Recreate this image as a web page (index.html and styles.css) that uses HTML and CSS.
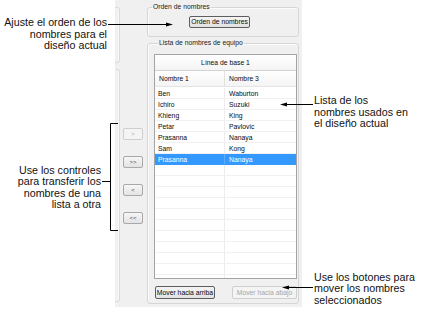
FILE: index.html
```html
<!DOCTYPE html>
<html lang="es">
<head>
<meta charset="utf-8">
<title>Orden de nombres</title>
<link rel="stylesheet" href="styles.css">
</head>
<body>
<div class="page">
  <div class="col-left">
    <p class="note note-order">Ajuste el orden de los<br>nombres para el<br>diseño actual</p>
    <p class="note note-transfer">Use los controles<br>para transferir los<br>nombres de una<br>lista a otra</p>
  </div>

  <div class="panel">
    <div class="sliver">
      <div class="sbox sbox-top"></div>
      <div class="sbox sbox-bottom"></div>
    </div>
    <div class="movecol">
      <button class="btn small disabled">&gt;</button>
      <button class="btn small">&gt;&gt;</button>
      <button class="btn small">&lt;</button>
      <button class="btn small">&lt;&lt;</button>
    </div>
    <div class="main">
      <fieldset class="group group-order">
        <legend>Orden de nombres</legend>
        <button class="btn default order-btn">Orden de nombres</button>
      </fieldset>
      <fieldset class="group group-list">
        <legend>Lista de nombres de equipo</legend>
        <div class="table">
          <div class="thead1">Línea de base 1</div>
          <div class="row thead2"><span class="c1">Nombre 1</span><span class="c2">Nombre 3</span></div>
          <div class="body">
            <div class="row"><span class="c1">Ben</span><span class="c2">Waburton</span></div>
            <div class="row"><span class="c1">Ichiro</span><span class="c2">Suzuki</span></div>
            <div class="row"><span class="c1">Khieng</span><span class="c2">King</span></div>
            <div class="row"><span class="c1">Petar</span><span class="c2">Pavlovic</span></div>
            <div class="row"><span class="c1">Prasanna</span><span class="c2">Nanaya</span></div>
            <div class="row"><span class="c1">Sam</span><span class="c2">Kong</span></div>
            <div class="row selected"><span class="c1">Prasanna</span><span class="c2">Nanaya</span></div>
            <div class="row"><span class="c1"></span><span class="c2"></span></div>
            <div class="row"><span class="c1"></span><span class="c2"></span></div>
            <div class="row"><span class="c1"></span><span class="c2"></span></div>
            <div class="row"><span class="c1"></span><span class="c2"></span></div>
            <div class="row"><span class="c1"></span><span class="c2"></span></div>
            <div class="row"><span class="c1"></span><span class="c2"></span></div>
            <div class="row"><span class="c1"></span><span class="c2"></span></div>
            <div class="row"><span class="c1"></span><span class="c2"></span></div>
            <div class="row"><span class="c1"></span><span class="c2"></span></div>
            <div class="row"><span class="c1"></span><span class="c2"></span></div>
            <div class="row"><span class="c1"></span><span class="c2"></span></div>
          </div>
        </div>
        <div class="actions">
          <button class="btn default up-btn">Mover hacia arriba</button>
          <button class="btn disabled down-btn">Mover hacia abajo</button>
        </div>
      </fieldset>
    </div>
  </div>

  <div class="col-right">
    <p class="note note-list">Lista de los<br>nombres usados en<br>el diseño actual</p>
    <p class="note note-move">Use los botones para<br>mover los nombres<br>seleccionados</p>
  </div>

  <svg class="callouts" width="425" height="323" viewBox="0 0 425 323" aria-hidden="true">
    <g stroke="#000" stroke-width="1" fill="none">
      <path d="M108 24.5 H168"/>
      <path d="M285 104.5 H313"/>
      <path d="M102 181.5 H110.5 M118 123.5 H110.5 V230.5 H118"/>
      <path d="M287 287.5 H313"/>
    </g>
    <g fill="#000">
      <path d="M173 24.5 L166 22.5 L166 26.5 Z"/>
      <path d="M280 104.5 L287 102.5 L287 106.5 Z"/>
      <path d="M282 287.5 L289 285.5 L289 289.5 Z"/>
    </g>
  </svg>
</div>
</body>
</html>
```

FILE: styles.css
```css
html, body {
  margin: 0;
  padding: 0;
  background: #ffffff;
}

.page {
  position: relative;
  width: 425px;
  height: 323px;
  display: grid;
  grid-template-columns: 115px 187px 123px;
  align-items: start;
  font-family: "Liberation Sans", Arial, sans-serif;
  overflow: hidden;
}

/* annotations */
.note {
  margin: 0;
  font-size: 10.7px;
  line-height: 11.5px;
  color: #111;
}

.col-left {
  display: flex;
  flex-direction: column;
  align-items: flex-end;
}

.note-order {
  text-align: right;
  margin-top: 17px;
  padding-right: 8px;
}

.note-transfer {
  text-align: right;
  margin-top: 113px;
  padding-right: 14px;
}

.col-right {
  display: flex;
  flex-direction: column;
  padding-left: 12px;
}

.note-list {
  margin-top: 95px;
}

.note-move {
  margin-top: 142px;
}

.callouts {
  position: absolute;
  left: 0;
  top: 0;
  pointer-events: none;
}

/* dialog panel */
.panel {
  height: 307px;
  background: #f0f0f0;
  display: flex;
  font-size: 6.8px;
  color: #0a0a0a;
}

.sliver {
  width: 5px;
  display: flex;
  flex-direction: column;
}

.sbox {
  border: 1px solid #dadada;
  border-left: none;
  border-radius: 0 3px 3px 0;
  background: #f0f0f0;
  box-shadow: inset -1px 0 0 #fafafa;
}

.sbox-top {
  margin-top: 7px;
  height: 54px;
}

.sbox-bottom {
  margin-top: 6px;
  height: 231px;
}

.movecol {
  width: 26px;
  box-sizing: border-box;
  padding: 128px 0 0 3px;
  display: flex;
  flex-direction: column;
  gap: 16px;
}

.main {
  width: 156px;
  display: flex;
  flex-direction: column;
}

/* buttons */
.btn {
  box-sizing: border-box;
  margin: 0;
  padding: 0;
  font-family: "Liberation Sans", Arial, sans-serif;
  font-size: 6.8px;
  line-height: 10px;
  color: #0a0a0a;
  border: 1px solid #a9a9a9;
  border-radius: 2px;
  background: linear-gradient(#f6f6f6, #e4e4e4);
  white-space: nowrap;
}

.btn.small {
  width: 20px;
  height: 12px;
  font-size: 6px;
  color: #444;
}

.btn.default {
  border-color: #5e5e5e;
  background: linear-gradient(#f4f4f4, #e2e2e2);
}

.btn.disabled {
  border-color: #cfcfcf;
  background: #f4f4f4;
  color: #a6a6a6;
}

/* group boxes */
.group {
  margin: 0 3px 0 1px;
  padding: 0;
  border: 1px solid #d6d6d6;
  border-radius: 3px;
  min-width: 0;
  box-shadow: inset 1px 1px 0 #fbfbfb;
}

.group legend {
  margin-left: 4px;
  padding: 0 1px;
  font-size: 6.8px;
  line-height: 8px;
  color: #1a1a1a;
}

.group-order {
  margin-top: 3px;
  padding: 5px 0 8px 0;
  display: flex;
  justify-content: center;
}

.order-btn {
  width: 61px;
  height: 12px;
  margin-left: -7px;
}

.group-list {
  margin-top: 2px;
  padding: 7px 1px 4px 6px;
}

/* table */
.table {
  width: 143px;
  height: 225px;
  box-sizing: border-box;
  border: 1px solid #a4a4a4;
  background: #ffffff;
  overflow: hidden;
  display: flex;
  flex-direction: column;
}

.thead1 {
  height: 15px;
  line-height: 15px;
  text-align: center;
  background: linear-gradient(#ffffff, #f4f4f4);
  border-bottom: 1px solid #d3d3d3;
  flex: none;
}

.row {
  display: flex;
  height: 11px;
  line-height: 11px;
  flex: none;
}

.row .c1 {
  width: 70px;
  padding-left: 3px;
  border-right: 1px solid #ececec;
  box-sizing: border-box;
}

.row .c2 {
  flex: 1;
  padding-left: 4px;
}

.thead2 {
  height: 15px;
  line-height: 15px;
  background: linear-gradient(#ffffff, #f4f4f4);
  border-bottom: 1px solid #e4e4e4;
}

.thead2 .c1 {
  border-right: 1px solid #e2e2e2;
  padding-left: 4px;
}

.body {
  padding-top: 1px;
}

.body .row {
  border-bottom: 1px solid #f1f1f1;
  box-sizing: border-box;
}

.body .row.selected {
  background: #3399ff;
  color: #ffffff;
  border-bottom-color: #3399ff;
}

.body .row.selected .c1 {
  border-right-color: #5aadff;
}

/* bottom actions */
.actions {
  margin-top: 7px;
  display: flex;
  gap: 17px;
  padding-left: 1px;
}

.up-btn {
  width: 60px;
  height: 13px;
}

.down-btn {
  width: 65px;
  height: 13px;
}
```
